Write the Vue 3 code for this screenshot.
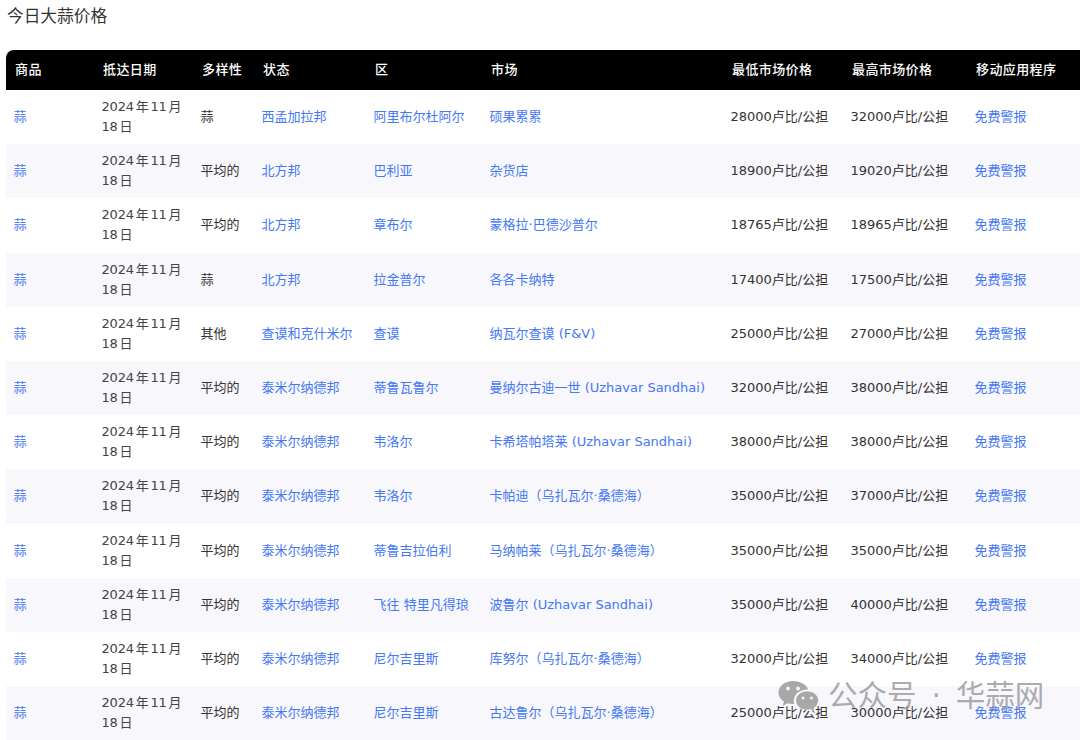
<script setup>
const cols = ['商品', '抵达日期', '多样性', '状态', '区', '市场', '最低市场价格', '最高市场价格', '移动应用程序']

const rows = [
  ['蒜', '西孟加拉邦', '阿里布尔杜阿尔', '硕果累累', 28000, 32000],
  ['平均的', '北方邦', '巴利亚', '杂货店', 18900, 19020],
  ['平均的', '北方邦', '章布尔', '蒙格拉·巴德沙普尔', 18765, 18965],
  ['蒜', '北方邦', '拉金普尔', '各各卡纳特', 17400, 17500],
  ['其他', '查谟和克什米尔', '查谟', '纳瓦尔查谟 (F&V)', 25000, 27000],
  ['平均的', '泰米尔纳德邦', '蒂鲁瓦鲁尔', '曼纳尔古迪一世 (Uzhavar Sandhai)', 32000, 38000],
  ['平均的', '泰米尔纳德邦', '韦洛尔', '卡希塔帕塔莱 (Uzhavar Sandhai)', 38000, 38000],
  ['平均的', '泰米尔纳德邦', '韦洛尔', '卡帕迪（乌扎瓦尔·桑德海）', 35000, 37000],
  ['平均的', '泰米尔纳德邦', '蒂鲁吉拉伯利', '马纳帕莱（乌扎瓦尔·桑德海）', 35000, 35000],
  ['平均的', '泰米尔纳德邦', '飞往 特里凡得琅', '波鲁尔 (Uzhavar Sandhai)', 35000, 40000],
  ['平均的', '泰米尔纳德邦', '尼尔吉里斯', '库努尔（乌扎瓦尔·桑德海）', 32000, 34000],
  ['平均的', '泰米尔纳德邦', '尼尔吉里斯', '古达鲁尔（乌扎瓦尔·桑德海）', 25000, 30000]
]
</script>

<template>
  <div class="page">
    <h3 class="title">今日大蒜价格</h3>
    <table class="price-table">
      <colgroup>
        <col style="width: 88px" />
        <col style="width: 99px" />
        <col style="width: 61px" />
        <col style="width: 112px" />
        <col style="width: 116px" />
        <col style="width: 241px" />
        <col style="width: 120px" />
        <col style="width: 124px" />
        <col style="width: 113px" />
      </colgroup>
      <thead>
        <tr>
          <th v-for="c in cols" :key="c">{{ c }}</th>
        </tr>
      </thead>
      <tbody>
        <tr v-for="(r, i) in rows" :key="i">
          <td><a>蒜</a></td>
          <td class="date">2024 年 11 月 18 日</td>
          <td>{{ r[0] }}</td>
          <td><a>{{ r[1] }}</a></td>
          <td><a>{{ r[2] }}</a></td>
          <td><a>{{ r[3] }}</a></td>
          <td>{{ r[4] }}卢比/公担</td>
          <td>{{ r[5] }}卢比/公担</td>
          <td><a>免费警报</a></td>
        </tr>
      </tbody>
    </table>

    <div class="watermark">
      <svg width="41" height="32" viewBox="0 0 41 32">
        <path d="M15 1C7 1 .5 6 .5 12.5c0 3.800 2.200 7 5.500 9.200L4.500 26l5.200-2.700c1.700.5 3.400.7 5.300.7h1.200a10 10 0 0 1-.5-3.200c0-6.300 6-11.300 13.400-11.300h.9C28.800 4.600 22.500 1 15 1z" fill="#a8a8a8" />
        <path d="M40.500 20.500c0-5.300-5.200-9.500-11.300-9.500s-11.500 4.200-11.500 9.500S23 30 29.200 30c1.300 0 2.600-.2 3.800-.5l4 2.200-1.100-3.500c2.800-1.800 4.600-4.600 4.600-7.700z" fill="#a8a8a8" stroke="#fff" stroke-width=".6" />
        <circle cx="10" cy="8.500" r="1.900" fill="#f4f4f4" />
        <circle cx="20" cy="8.500" r="1.900" fill="#f4f4f4" />
        <circle cx="25" cy="18" r="1.500" fill="#f4f4f4" />
        <circle cx="33.500" cy="18" r="1.500" fill="#f4f4f4" />
      </svg>
      <span>公众号 · 华蒜网</span>
    </div>
  </div>
</template>

<style scoped>
.page {
  position: relative;
  width: 1080px;
  height: 740px;
  overflow: hidden;
  background: #fff;
  font-family: "DejaVu Sans", "Noto Sans CJK SC", sans-serif;
  color: #333;
}

.title {
  margin: 0;
  padding: 4px 0 0 7px;
  height: 50px;
  box-sizing: border-box;
  font-size: 16.7px;
  font-weight: 400;
  line-height: 24px;
  color: #333;
}

.price-table {
  margin-left: 6px;
  width: 1074px;
  table-layout: fixed;
  border-collapse: separate;
  border-spacing: 0;
  font-size: 13px;
}

.price-table th {
  height: 40px;
  padding: 0 0 3px 9px;
  box-sizing: border-box;
  background: #000;
  color: #fff;
  text-align: left;
  font-size: 13px;
  font-weight: 500;
  letter-spacing: .4px;
  white-space: nowrap;
}

.price-table th:first-child {
  border-top-left-radius: 8px;
}

.price-table td {
  height: 54.2px;
  padding: 0 7.5px;
  box-sizing: border-box;
  line-height: 20px;
  color: #333;
  white-space: normal;
}

.price-table td.date {
  padding-right: 0;
  word-spacing: -2px;
  letter-spacing: -.2px;
  color: #444;
}

.price-table td:nth-child(n+4) {
  white-space: nowrap;
}

.price-table tbody tr:nth-child(even) td {
  background: #f7f7fc;
}

.price-table a {
  color: #4478f5;
  text-decoration: none;
}

.watermark {
  position: absolute;
  left: 778px;
  top: 680px;
  display: flex;
  align-items: center;
  gap: 9px;
  pointer-events: none;
}

.watermark span {
  font-size: 29.500px;
  word-spacing: 5.500px;
  line-height: 32px;
  color: rgba(150, 150, 150, 0.8);
  white-space: nowrap;
}
</style>
